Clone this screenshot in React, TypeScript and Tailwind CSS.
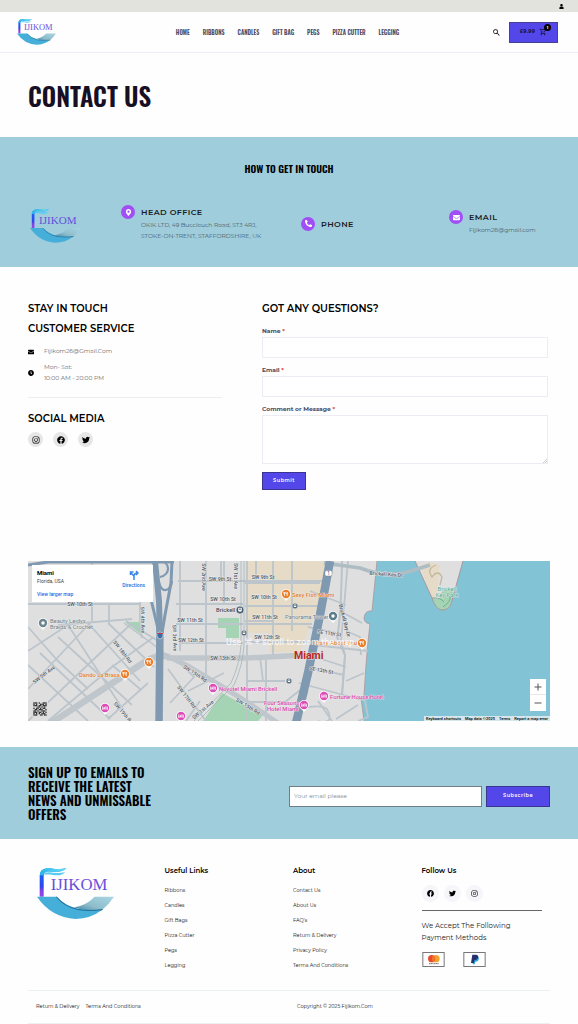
import { useId, type ReactNode } from "react";
import {
  FaClock,
  FaEnvelope,
  FaFacebook,
  FaInstagram,
  FaMapMarkerAlt,
  FaPhoneAlt,
  FaTwitter,
  FaUser,
} from "react-icons/fa";
import { MdSearch, MdOutlineShoppingCart } from "react-icons/md";

const display = "font-['Oswald','Liberation_Sans_Narrow','Liberation_Sans',sans-serif]";

function Logo({ className }: { className: string }) {
  const id = useId();
  return (
    <svg viewBox="0 0 230 152" className={className} role="img" aria-label="Fijikom">
      <defs>
        <linearGradient id={id + "p"} x1="0" y1="0" x2="0" y2="1">
          <stop offset="0" stopColor="#2fb4ee" />
          <stop offset="0.3" stopColor="#1f5df5" />
          <stop offset="0.65" stopColor="#2f45ee" />
          <stop offset="0.8" stopColor="#8b3fe6" />
          <stop offset="1" stopColor="#8a4be8" />
        </linearGradient>
        <linearGradient id={id + "f"} x1="0" y1="0" x2="1" y2="0">
          <stop offset="0" stopColor="#2bb3e4" />
          <stop offset="0.6" stopColor="#4fd0f3" />
          <stop offset="1" stopColor="#6fd6f2" />
        </linearGradient>
        <linearGradient id={id + "r"} x1="0" y1="1" x2="1" y2="0">
          <stop offset="0" stopColor="#3b7f9d" />
          <stop offset="0.4" stopColor="#8dbccb" />
          <stop offset="1" stopColor="#abd6e2" />
        </linearGradient>
        <linearGradient id={id + "t"} x1="0" y1="0" x2="0" y2="1">
          <stop offset="0" stopColor="#8058dd" />
          <stop offset="1" stopColor="#4f46d8" />
        </linearGradient>
      </defs>
      <path d="M8 86V22Q9 3 30 1C48 0 60 7 88 0Q80 10 64 11C48 12 38 9 28 11Q20 14 20 24V86Z" fill={`url(#${id}p)`} />
      <path d="M8 22Q9 3 30 1C48 0 60 7 88 0Q80 10 64 11C48 12 38 9 28 11Q20 14 18 22Z" fill={`url(#${id}f)`} />
      <path d="M21 20Q24 12 36 13C52 15 66 17 84 12Q76 22 60 22C44 21 34 18 21 20Z" fill="#58cdf0" />
      <text x="41" y="66" fontSize="50" fontFamily="Liberation Serif, serif" fill={`url(#${id}t)`}>
        IJIKOM
      </text>
      <path d="M172 86H230Q216 108 192 128Q155 132 110 118Q148 112 172 86Z" fill={`url(#${id}r)`} />
      <path d="M0 86H58Q84 112 116 120Q155 128 196 124Q160 152 115 152Q42 148 0 86Z" fill="#45afd9" />
      <path d="M58 86Q82 116 122 124Q160 130 196 124" fill="none" stroke="#236e97" strokeWidth="3" />
    </svg>
  );
}

function InfoItem({ icon, title, children }: { icon: ReactNode; title: string; children?: ReactNode }) {
  return (
    <div className="flex gap-1.5">
      <span className="flex h-3.5 w-3.5 shrink-0 items-center justify-center rounded-full bg-[#a04ff5] text-[7px] text-white">
        {icon}
      </span>
      <div className="pt-px">
        <h3 className="text-[8px] leading-3 font-semibold tracking-wider text-[#1b1b22]">{title}</h3>
        {children}
      </div>
    </div>
  );
}

function SocialLink({ label, className, children }: { label: string; className: string; children: ReactNode }) {
  return (
    <a href="#" aria-label={label} className={"flex items-center justify-center rounded-full text-black " + className}>
      {children}
    </a>
  );
}

const minorRoads = [
  "M64 0V60M81 44V62M112 40V60L114 77M0 43H112M30 64L104 58",
  "M152 0V90M178 0V118M150 20H300M148 43H215M148 63H215M152 82H215M217 22H292M217 45H290M217 63H284M217 81H280",
  "M193 0V18M196 0V44M232 96L235 120M245 0V95M264 0V70M219 0V160",
  "M0 90L40 64L96 150M0 128L62 62M60 62L112 120M80 62L126 106M0 104L60 160M12 92L82 158M30 76L104 144",
  "M0 66L30 100L60 128M104 62L30 132L0 160M126 76L84 106L20 160M80 158L120 122M112 128L84 104",
  "M140 108L178 160M150 100L166 116L142 142M160 130L196 112M158 160L172 140M219 120H257M219 141H257L276 126",
  "M282 30L318 44M280 66L308 72M286 84L340 90M284 95L318 106M278 106L316 114M271 122L338 140M320 0L313 80L317 94L314 134",
  "M312 50L334 62M318 70L332 76L333 94M290 140L304 160M268 148Q298 142 300 150Q306 164 290 160M308 158L330 144M336 134L340 156L330 160",
  "M318 120L336 112M245 60H217M228 0V20M280 130L268 160M238 96V160",
];

const labels: { t: string; x: number; y: number; r?: number }[] = [
  { t: "SW 9th St", x: 192, y: 20 },
  { t: "SW 9th St", x: 235, y: 18 },
  { t: "SW 10th St", x: 195, y: 40 },
  { t: "SW 10th St", x: 236, y: 38 },
  { t: "SW 11th St", x: 162, y: 61 },
  { t: "SW 11th St", x: 237, y: 58 },
  { t: "SW 12th St", x: 163, y: 81 },
  { t: "SW 12th St", x: 239, y: 78 },
  { t: "SW 13th St", x: 195, y: 99 },
  { t: "SW 10th St", x: 52, y: 45 },
  { t: "SW 2nd Ave", x: 174, y: 16, r: 90 },
  { t: "SW 1st Ave", x: 206, y: 15, r: 90 },
  { t: "SW 4th Ave", x: 113, y: 59, r: 88 },
  { t: "SW 3rd Ave", x: 145, y: 77, r: 88 },
  { t: "SW 18th Rd", x: 93, y: 92, r: 52 },
  { t: "SW 5th Ave", x: 17, y: 115, r: -37 },
  { t: "SW 19th Rd", x: 94, y: 153, r: 50 },
  { t: "SW 15th Rd", x: 166, y: 114, r: 33 },
  { t: "SW 17th Rd", x: 157, y: 137, r: 52 },
  { t: "SW 1st Ave", x: 176, y: 150, r: -40 },
  { t: "SW 15th Rd", x: 219, y: 147, r: 32 },
  { t: "SE 11th St", x: 301, y: 74, r: 8 },
  { t: "SE 13th St", x: 293, y: 111, r: 10 },
  { t: "Brickell Bay Dr", x: 315, y: 60, r: 75 },
  { t: "Brickell Key Dr", x: 358, y: 15, r: 4 },
];

function Pin({ x, y, c, kind }: { x: number; y: number; c: string; kind: "food" | "bed" | "dot" }) {
  return (
    <g transform={`translate(${x} ${y})`}>
      <path d="M-4 2Q-2 5 0 7Q2 5 4 2Z" fill="#fff" />
      <circle r="4.9" fill="#fff" />
      <circle r="4.2" fill={c} />
      {kind === "food" && <path d="M-1.5 -2V2M-2.3 -2V-.5H-.7V-2M1.3 2V-2Q.3 -1 .5 .3H1.3" stroke="#fff" strokeWidth=".7" fill="none" />}
      {kind === "bed" && <path d="M-2.3 -1.6V1.7M-2.3 .9H2.4V1.7M2.4 .9V-.9H-.3V.9M-1.4 -.3H-.9" stroke="#fff" strokeWidth=".8" fill="none" />}
      {kind === "dot" && <circle r="1.7" fill="#fff" />}
    </g>
  );
}

function Station({ x, y, s }: { x: number; y: number; s: number }) {
  return (
    <g transform={`translate(${x} ${y}) scale(${s})`}>
      <circle r="4" fill="#40596b" stroke="#fff" strokeWidth=".6" />
      <rect x="-1.8" y="-2.2" width="3.6" height="3.8" rx=".8" fill="#fff" />
      <path d="M-1.1 -1.4H1.1V-.1H-1.1ZM-1.4 2.4L-.7 1.6M1.4 2.4L.7 1.6" fill="#40596b" stroke="#fff" strokeWidth=".4" />
    </g>
  );
}

function MapArt() {
  return (
    <svg
      viewBox="0 0 522 160"
      preserveAspectRatio="xMidYMid slice"
      className="h-full w-full"
      role="img"
      aria-label="Map of Miami"
      fontFamily="Roboto, sans-serif"
    >
      <rect width="522" height="160" fill="#83c3d6" />
      <path d="M0 0H349L344 50Q337 49 336 57Q336 62 342 63L340 81L338 104L336 134L333 137L336 160H0Z" fill="#e0dfe0" />
      <path d="M349 0L344 50Q337 49 336 57Q336 62 342 63L340 81L338 104L336 134L333 137L336 160" fill="none" stroke="#a9979b" strokeWidth=".8" />
      <path d="M217 0H305L290 45L272 91H242L240 72H217Z" fill="#e5dbc7" />
      <path d="M387 0L404 37Q408 49 414 49Q421 49 423 43L435 0Z" fill="#e0dfe0" />
      <path d="M392 6Q400 -2 412 4L410 20L408 40L404 36Z" fill="#e5dbc7" />
      <path d="M404 37Q408 49 414 49Q421 49 423 43L426 28Q414 24 411 38Z" fill="#a4d4b4" />
      <path d="M404 37Q412 36 416 41M422 34Q424 40 415 46" fill="none" stroke="#5a9f86" strokeWidth=".7" />
      <path d="M387 0L404 37Q408 49 414 49Q421 49 423 43L435 0" fill="none" stroke="#a9979b" strokeWidth="1" />
      <path d="M408 4Q398 8 404 16Q410 8 414 16L412 24" fill="none" stroke="#c3b89f" strokeWidth="1.3" />
      <path d="M190 57H211V77H198V67H190ZM97 61H114V74ZM194 132L235 154L230 160H175Z" fill="#a4d4b4" />

      <g fill="none" stroke="#bcc5cb" strokeWidth="1.8">
        {minorRoads.map((d) => (
          <path key={d} d={d} />
        ))}
      </g>
      <g fill="none" stroke="#b9c3ca">
        <path d="M20 164L60 138L112 104Q128 92 141 96" strokeWidth="6.5" stroke="#c0c7cc" />
        <path d="M139 97H219L277 94" strokeWidth="5.5" stroke="#c0c7cc" />
        <path d="M141 96L160 105L198 128L219 141L250 162" strokeWidth="5" stroke="#c0c7cc" />
        <path d="M314 0Q313 60 309 76L317 94L314 134" strokeWidth="2" />
        <path d="M296 2L332 7Q360 18 386 9L402 4" strokeWidth="3.5" stroke="#aebcc4" />
        <path d="M96 62L126 84L141 96M98 60L130 80" strokeWidth="1.5" />
      </g>
      <g fill="none" stroke="#9eb0b2" strokeWidth=".7">
        <path d="M213 0V84Q212 102 203 122L166 160M216 0V84Q215 104 206 124L170 160" />
      </g>
      <g fill="none" stroke="#7f99b0">
        <path d="M0 4L20 1H146" strokeWidth="3" />
        <path d="M131 162L132 64" strokeWidth="7.500" />
        <path d="M132 76L131 40L127 0" strokeWidth="6" />
        <path d="M131 72L121 30M134 72L137 54L143 22L144 0" strokeWidth="3" />
        <path d="M130 0C143 0 143 14 132 16M131 21Q133 30 138 29Q143 28 144 20" strokeWidth="2.200" />
        <path d="M302 0L292 54L280 112L268 162" strokeWidth="8.5" />
      </g>

      <g fontSize="5.2" fill="#4d5965" stroke="#efefef" strokeWidth=".8" paintOrder="stroke" textAnchor="middle" fontWeight="500">
        {labels.map((l, i) => (
          <text key={i} transform={`translate(${l.x} ${l.y}) rotate(${l.r ?? 0})`}>
            {l.t}
          </text>
        ))}
      </g>

      <g stroke="#efefef" strokeWidth=".7" paintOrder="stroke" fontSize="5.8">
        <text x="22" y="62" fill="#6d7c85">Beauty Leidys</text>
        <text x="22" y="68" fill="#6d7c85">Braids &amp; Crochet</text>
        <text x="188" y="51" fill="#35495a" fontWeight="500">Brickell</text>
        <text x="51" y="116" fill="#df7b28" fontWeight="500">Dando La Brasa</text>
        <text x="264" y="36" fill="#df7b28" fontWeight="500">Sexy Fish Miami</text>
        <text x="286" y="84" fill="#df7b28" fontWeight="500">Crazy About You</text>
        <text x="257" y="58" fill="#6d7c85">Panorama Tower</text>
        <text x="191" y="130" fill="#d945ab" fontWeight="500">Novotel Miami Brickell</text>
        <text x="302" y="138" fill="#d945ab" fontWeight="500">Fortune House Hotel</text>
        <text x="236" y="144" fill="#d945ab" fontWeight="500">Four Seasons</text>
        <text x="239" y="150" fill="#d945ab" fontWeight="500">Hotel Miami</text>
        <text x="419" y="30" fill="#52a78d" textAnchor="middle">Brickell</text>
        <text x="419" y="36" fill="#52a78d" textAnchor="middle">Key Park</text>
      </g>
      <text x="198" y="84" fontSize="9" fontWeight="500" fill="#fff" fillOpacity=".75">Use ⌘ + scroll to zoom the map</text>
      <text x="266" y="98" fontSize="10.5" fontWeight="700" fill="#b7261f" stroke="#e8e4e2" strokeWidth=".8" paintOrder="stroke">
        Miami
      </text>

      <Pin x={15} y={62} c="#6c858f" kind="dot" />
      <Pin x={305} y={55} c="#5a7d89" kind="dot" />
      <Pin x={121} y={101} c="#ec802c" kind="food" />
      <Pin x={97} y={113} c="#ec802c" kind="food" />
      <Pin x={258} y={33} c="#ec802c" kind="food" />
      <Pin x={334} y={82} c="#ec802c" kind="food" />
      <Pin x={77} y={147} c="#dd4db6" kind="bed" />
      <Pin x={185} y={127} c="#dd4db6" kind="bed" />
      <Pin x={153} y={155} c="#dd4db6" kind="bed" />
      <Pin x={296} y={135} c="#dd4db6" kind="bed" />
      <Pin x={276} y={144} c="#dd4db6" kind="bed" />
      <Station x={212} y={49} s={1} />
      <Station x={216} y={72} s={0.7} />
      <Station x={267} y={45} s={0.7} />
      <Station x={261} y={120} s={0.7} />
      <g>
        <rect x="297" y="9.500" width="7" height="5.500" rx="1.500" fill="#fff" stroke="#7b8790" strokeWidth=".5" />
        <text x="300.500" y="14" fontSize="4.500" textAnchor="middle" fill="#3c4650">1</text>
        <path d="M129 72Q132 70 135 72V75Q134 78 132 78Q130 78 129 75Z" fill="#3b6ea8" stroke="#fff" strokeWidth=".5" />
        <path d="M129 72.500H135" stroke="#cf3b3b" strokeWidth="1" />
      </g>
    </svg>
  );
}

const qr = [
  "1110100111",
  "1010011101",
  "1110110111",
  "0001101010",
  "1011010110",
  "0110111001",
  "1101001110",
  "1110110101",
  "1010101110",
  "1110011011",
];

function MapCard() {
  return (
    <section className="relative mx-7 h-40 overflow-hidden font-['Roboto',sans-serif]" aria-label="Map">
      <MapArt />
      <div className="absolute top-1 left-1 flex h-[37px] w-[121px] justify-between bg-white p-1">
        <div className="flex flex-col pl-px">
          <strong className="text-[6px] leading-[7px] font-bold text-black">Miami</strong>
          <span className="mt-0.5 text-[5px] leading-[6px] text-[#444]">Florida, USA</span>
          <a href="#" className="mt-auto text-[5px] leading-[7px] font-medium text-[#1a6fe0]">
            View larger map
          </a>
        </div>
        <a href="#" className="flex flex-col items-center pr-1 text-[5px] leading-[7px] font-medium text-[#1a6fe0]">
          <svg viewBox="0 0 10 10" className="mt-px mb-0.5 h-2.5 w-2.5" fill="none" stroke="#3a86e8" strokeWidth="1.500" aria-hidden="true">
            <path d="M5 10V6L2 3M1.500 5V2H4.500M5 6Q5 3 9 3M7 1L9 3L7 5" />
          </svg>
          Directions
        </a>
      </div>
      <svg viewBox="-1 -1 12 12" className="absolute bottom-1 left-1 h-4 w-4" aria-hidden="true">
        <rect x="-1" y="-1" width="12" height="12" fill="#ddd" />
        {qr.map((row, y) =>
          row.split("").map((v, x) => v === "1" && <rect key={`${x}-${y}`} x={x} y={y} width="1" height="1" fill="#333" />),
        )}
      </svg>
      <div className="absolute right-1 bottom-2.5 flex w-4 flex-col divide-y divide-gray-200 bg-white text-[#555]">
        <button type="button" aria-label="Zoom in" className="flex h-4 items-center justify-center">
          <svg viewBox="0 0 8 8" className="h-2 w-2" stroke="currentColor" aria-hidden="true">
            <path d="M4 .5V7.500M.5 4H7.500" />
          </svg>
        </button>
        <button type="button" aria-label="Zoom out" className="flex h-4 items-center justify-center">
          <svg viewBox="0 0 8 8" className="h-2 w-2" stroke="currentColor" aria-hidden="true">
            <path d="M.5 4H7.500" />
          </svg>
        </button>
      </div>
      <div className="absolute right-0 bottom-0 flex gap-1 bg-[#d5e7ec] px-0.5 text-[4px] leading-[5px] font-medium text-black">
        <button type="button">Keyboard shortcuts</button>
        <span>Map data ©2025</span>
        <a href="#">Terms</a>
        <a href="#">Report a map error</a>
      </div>
    </section>
  );
}

function Label({ htmlFor, children }: { htmlFor: string; children: ReactNode }) {
  return (
    <label htmlFor={htmlFor} className="block text-[6px] leading-3 font-bold text-[#4d4a63]">
      {children} <span className="text-[#e0452f]">*</span>
    </label>
  );
}

function LinkColumn({ title, items }: { title: string; items: string[] }) {
  return (
    <nav aria-label={title}>
      <h2 className="text-[7px] leading-3 font-semibold text-black">{title}</h2>
      <ul className="mt-1.5">
        {items.map((item) => (
          <li key={item} className="text-[5px] leading-[15px] text-[#111]">
            <a href="#">{item}</a>
          </li>
        ))}
      </ul>
    </nav>
  );
}

const field = "block w-full border border-[#ececf4] bg-white px-2 text-[8px] outline-none";

export default function App() {
  return (
    <div className="bg-[#fefefe] font-['Montserrat','Inter',sans-serif] text-black">
      <div className="flex h-3 items-center justify-end bg-[#e2e3dc] pr-3.5">
        <a href="#" aria-label="Account" className="text-[5px]">
          <FaUser />
        </a>
      </div>

      <header className="flex h-[41px] items-center border-b border-[#eeedf7] pr-5 pl-[17px]">
        <div className="flex-1">
          <a href="#" aria-label="Fijikom home" className="inline-block align-middle">
            <Logo className="w-[39px]" />
          </a>
        </div>
        <nav aria-label="Main" className={"flex gap-[13px] text-[6px] font-semibold text-[#4b4860] " + display}>
          {["HOME", "RIBBONS", "CANDLES", "GIFT BAG", "PEGS", "PIZZA CUTTER", "LEGGING"].map((n) => (
            <a key={n} href="#">
              {n}
            </a>
          ))}
        </nav>
        <div className="flex flex-1 items-center justify-end gap-2">
          <button type="button" aria-label="Search" className="text-[9px]">
            <MdSearch />
          </button>
          <button
            type="button"
            aria-label="Cart, £9.99, 1 item"
            className="flex h-[21px] w-[49px] items-center justify-center gap-1 border border-[#45408f] bg-[#5347ea] text-[5px] font-bold tracking-wider text-[#17123a]"
          >
            £9.99
            <span className="relative text-[8px]">
              <MdOutlineShoppingCart />
              <span className="absolute -top-1 -right-1 flex h-[7px] w-[7px] items-center justify-center rounded-full bg-black text-[4px] tracking-normal text-white">
                1
              </span>
            </span>
          </button>
        </div>
      </header>

      <main>
        <div className="flex h-21 items-center px-7 pt-0.5">
          <h1 className={"text-[25px] leading-8 font-semibold text-[#170f23] " + display}>CONTACT US</h1>
        </div>

        <section className="h-[130px] bg-[#a0cddc] px-7 pt-6">
          <h2 className={"text-center text-[10px] leading-4 font-semibold " + display}>HOW TO GET IN TOUCH</h2>
          <div className="mt-7 grid grid-cols-[93fr_180fr_148fr_101fr] items-center">
            <Logo className="mt-1 ml-0.5 w-[51px]" />
            <InfoItem icon={<FaMapMarkerAlt />} title="HEAD OFFICE">
              <p className="mt-0.5 text-[6px] leading-[11px] font-light text-[#1c2a30]">
                OKIK LTD, 49 Buccleuch Road, ST3 4RJ,
                <br />
                STOKE-ON-TRENT, STAFFORDSHIRE, UK
              </p>
            </InfoItem>
            <InfoItem icon={<FaPhoneAlt />} title="PHONE" />
            <InfoItem icon={<FaEnvelope />} title="EMAIL">
              <p className="text-[6px] leading-[14px] font-light text-[#1c2a30]">Fijikom26@gmail.com</p>
            </InfoItem>
          </div>
        </section>

        <div className="grid grid-cols-[234fr_288fr] px-7 pt-[35px] pb-[71px]">
          <section className="pr-10">
            <h2 className="text-[10px] leading-[14px] font-semibold">STAY IN TOUCH</h2>
            <h2 className="mt-1.5 text-[10px] leading-[14px] font-semibold">CUSTOMER SERVICE</h2>
            <ul className="mt-2.5 flex flex-col gap-[5px] text-[6px] leading-[11px] font-light text-[#222]">
              <li className="flex items-center gap-2.5">
                <FaEnvelope className="h-1.5 w-1.5 text-black" />
                Fijikom26@Gmail.Com
              </li>
              <li className="flex items-center gap-2.5">
                <FaClock className="h-1.5 w-1.5 text-black" />
                <span>
                  Mon- Sat:
                  <br />
                  10:00 AM - 20:00 PM
                </span>
              </li>
            </ul>
            <hr className="mt-[13px] border-[#eeeeee]" />
            <h2 className="mt-[14px] text-[10px] leading-[14px] font-semibold">SOCIAL MEDIA</h2>
            <div className="mt-1.5 flex gap-2.5 text-[8px]">
              <SocialLink label="Instagram" className="h-[15px] w-[15px] bg-[#e6e6e6]">
                <FaInstagram />
              </SocialLink>
              <SocialLink label="Facebook" className="h-[15px] w-[15px] bg-[#e6e6e6]">
                <FaFacebook />
              </SocialLink>
              <SocialLink label="Twitter" className="h-[15px] w-[15px] bg-[#e6e6e6]">
                <FaTwitter />
              </SocialLink>
            </div>
          </section>

          <form className="pr-0.5" onSubmit={(e) => e.preventDefault()}>
            <h2 className="text-[10px] leading-[14px] font-semibold">GOT ANY QUESTIONS?</h2>
            <div className="mt-[9px] flex flex-col gap-1.5">
              <div>
                <Label htmlFor="name">Name</Label>
                <input id="name" className={"h-[21px] " + field} />
              </div>
              <div>
                <Label htmlFor="email">Email</Label>
                <input id="email" type="email" className={"h-[21px] " + field} />
              </div>
              <div>
                <Label htmlFor="message">Comment or Message</Label>
                <textarea id="message" className={"h-[49px] resize-none " + field} />
                <svg viewBox="0 0 4 4" className="-mt-[5px] mr-px ml-auto h-1 w-1" stroke="#999" strokeWidth=".5" aria-hidden="true">
                  <path d="M0 4L4 0M2 4L4 2" />
                </svg>
              </div>
            </div>
            <button
              type="submit"
              className="mt-[9px] h-[18px] w-11 border border-[#3b3490] bg-[#5347ea] text-[5px] font-semibold tracking-widest text-white"
            >
              Submit
            </button>
          </form>
        </div>

        <MapCard />

        <section className="mt-[26px] flex h-23 items-center justify-between bg-[#a0cddc] px-7">
          <h2 className={"text-[13px] leading-[14px] font-semibold " + display}>
            SIGN UP TO EMAILS TO
            <br />
            RECEIVE THE LATEST
            <br />
            NEWS AND UNMISSABLE
            <br />
            OFFERS
          </h2>
          <form className="mt-1.5 flex w-1/2 max-w-[261px] gap-1" onSubmit={(e) => e.preventDefault()}>
            <input
              type="email"
              aria-label="Your email"
              placeholder="Your email please"
              className="h-[21px] min-w-0 flex-1 border border-[#6e7f86] bg-white px-1 text-[6px] outline-none placeholder:text-[#8a8a8a]"
            />
            <button
              type="submit"
              className="h-[21px] w-16 border border-[#3b3490] bg-[#5347ea] text-[5px] font-semibold tracking-widest text-white"
            >
              Subscribe
            </button>
          </form>
        </section>
      </main>

      <footer>
        <div className="grid grid-cols-4 pt-[26px] pr-7 pb-[17px] pl-9">
          <div className="pt-[3px] pl-px">
            <Logo className="w-[77px]" />
          </div>
          <LinkColumn title="Useful Links" items={["Ribbons", "Candles", "Gift Bags", "Pizza Cutter", "Pegs", "Legging"]} />
          <LinkColumn
            title="About"
            items={["Contact Us", "About Us", "FAQ's", "Return & Delivery", "Privacy Policy", "Terms And Conditions"]}
          />
          <div className="pr-2">
            <h2 className="text-[7px] leading-3 font-semibold text-black">Follow Us</h2>
            <div className="mt-2 flex gap-[5px] text-[7px]">
              <SocialLink label="Facebook" className="h-[17px] w-[17px] bg-[#f5f5fa]">
                <FaFacebook />
              </SocialLink>
              <SocialLink label="Twitter" className="h-[17px] w-[17px] bg-[#f5f5fa]">
                <FaTwitter />
              </SocialLink>
              <SocialLink label="Instagram" className="h-[17px] w-[17px] bg-[#f5f5fa]">
                <FaInstagram />
              </SocialLink>
            </div>
            <hr className="mt-2 border-[#666]" />
            <p className="mt-[9px] text-[7px] leading-3 text-[#222]">
              We Accept The Following
              <br />
              Payment Methods
            </p>
            <div className="mt-2 flex gap-[18px]">
              <svg viewBox="0 0 67 45" className="h-[15px] w-[23px]" role="img" aria-label="Mastercard">
                <rect x="1.500" y="1.500" width="64" height="42" fill="#fff" stroke="#777" strokeWidth="3" />
                <circle cx="28" cy="20" r="11" fill="#ea4b2b" />
                <circle cx="41" cy="20" r="11" fill="#f3a02f" />
                <path d="M34.500 11A11 11 0 0 1 34.500 29A11 11 0 0 1 34.500 11" fill="#f2702a" />
                <path d="M20 35H50" stroke="#555" strokeWidth="2.500" strokeDasharray="4 1" />
              </svg>
              <svg viewBox="0 0 67 45" className="h-[15px] w-[23px]" role="img" aria-label="PayPal">
                <rect x="1.500" y="1.500" width="64" height="42" fill="#fff" stroke="#777" strokeWidth="3" />
                <path d="M30 13H43Q49 16 45 25Q42 30 36 29L34 37H28Z" fill="#2aa5de" />
                <path d="M27 8H39Q47 10 44 18Q41 25 34 24L31 33H23Z" fill="#27306f" />
              </svg>
            </div>
          </div>
        </div>

        <div className="mx-7 grid h-[34px] grid-cols-2 items-center border-y border-[#ebf0f2] text-[5px] text-[#111]">
          <div className="flex gap-1.5 pl-2">
            <a href="#">Return &amp; Delivery</a>
            <a href="#">Terms And Conditions</a>
          </div>
          <p className="pl-2">Copyright © 2025 Fijikom.Com</p>
        </div>
      </footer>
    </div>
  );
}
